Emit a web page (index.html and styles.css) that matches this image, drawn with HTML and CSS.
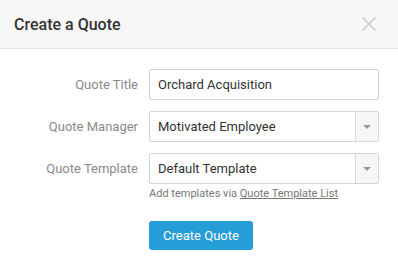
FILE: index.html
```html
<!DOCTYPE html>
<html lang="en">
<head>
  <meta charset="UTF-8">
  <title>Create a Quote</title>
  <link rel="stylesheet" href="styles.css">
</head>
<body>
  <div class="modal">
    <div class="modal-header">
      <h1>Create a Quote</h1>
      <button class="close" aria-label="Close">
        <svg width="14" height="14" viewBox="0 0 14 14"><path d="M0.5 0.5 L13.5 13.5 M13.5 0.5 L0.5 13.5" stroke="#c4c4c4" stroke-width="1.2" fill="none"/></svg>
      </button>
    </div>

    <div class="modal-body">
      <div class="form-row">
        <label for="title">Quote Title</label>
        <input type="text" id="title" value="Orchard Acquisition">
      </div>

      <div class="form-row">
        <label>Quote Manager</label>
        <div class="select">
          <span class="select-value">Motivated Employee</span>
          <span class="select-arrow"></span>
        </div>
      </div>

      <div class="form-row">
        <label>Quote Template</label>
        <div class="select">
          <span class="select-value">Default Template</span>
          <span class="select-arrow"></span>
        </div>
        <div class="help">Add templates via <a href="#">Quote Template List</a></div>
      </div>

      <div class="form-row">
        <span></span>
        <div><button class="btn-primary">Create Quote</button></div>
      </div>
    </div>
  </div>
</body>
</html>
```

FILE: styles.css
```css
body {
  margin: 0;
  font-family: Roboto, 'Liberation Sans', sans-serif;
  background: #fff;
}
.modal {
  width: 398px;
  height: 279px;
  background: #fff;
}
.modal-header {
  height: 48px;
  background: #f7f7f7;
  border-bottom: 1px solid #e3e3e3;
  display: flex;
  align-items: center;
  justify-content: space-between;
  padding: 0 22px 0 14px;
}
.modal-header h1 {
  margin: 0;
  font-size: 16px;
  font-weight: 500;
  color: #333;
}
.close {
  background: none;
  border: none;
  padding: 0;
  width: 14px;
  height: 14px;
  display: flex;
}
.modal-body {
  padding: 20px 20px 0 0;
}
.form-row {
  display: grid;
  grid-template-columns: 138px 230px;
  column-gap: 11px;
  align-items: center;
  margin-bottom: 11px;
}
.form-row label {
  text-align: right;
  font-size: 13px;
  color: #8a8a8a;
}
input[type="text"] {
  box-sizing: border-box;
  height: 31px;
  width: 100%;
  border: 1px solid #d4d4d4;
  border-radius: 2px;
  padding: 0 8px;
  font-family: inherit;
  font-size: 13px;
  color: #333;
  margin: 0;
}
.select {
  box-sizing: border-box;
  height: 31px;
  border: 1px solid #d4d4d4;
  border-radius: 2px;
  display: flex;
  align-items: stretch;
  font-size: 13px;
  color: #333;
}
.select-value {
  flex: 1;
  display: flex;
  align-items: center;
  padding-left: 8px;
}
.select-arrow {
  width: 22px;
  border-left: 1px solid #d9d9d9;
  background: #f6f6f6;
  position: relative;
}
.select-arrow::after {
  content: "";
  position: absolute;
  left: 7px;
  top: 13px;
  border-left: 4px solid transparent;
  border-right: 4px solid transparent;
  border-top: 4px solid #999;
}
.help {
  grid-column: 2;
  font-size: 11px;
  color: #777;
  margin-top: 3px;
}
.help a {
  color: #777;
}
.btn-primary {
  margin-top: 10px;
  background: #259dd6;
  color: #fff;
  border: none;
  border-radius: 3px;
  height: 29px;
  width: 104px;
  font-family: inherit;
  font-size: 13px;
  padding: 0;
}
```
